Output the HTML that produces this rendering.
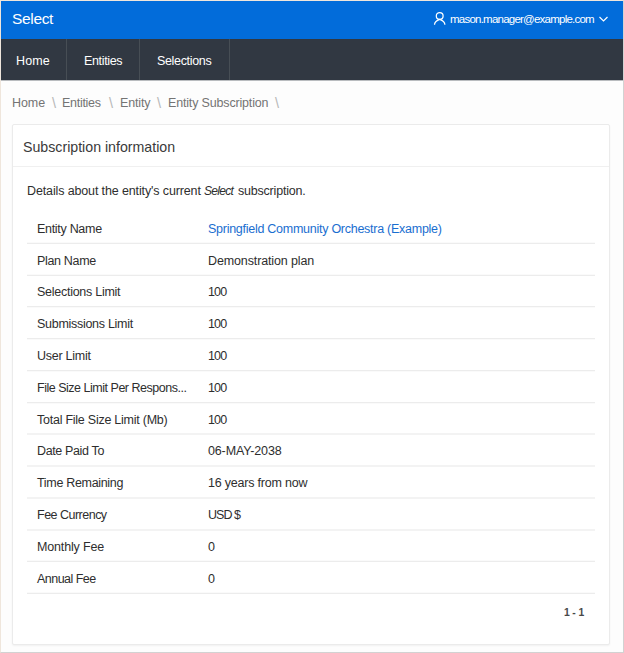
<!DOCTYPE html>
<html><head><meta charset="utf-8"><title>Select</title>
<style>
*{box-sizing:border-box;margin:0;padding:0}
html,body{width:624px;height:653px;overflow:hidden;background:#fdfdfd}
body{font-family:"Liberation Sans",sans-serif;position:relative}
.t{position:absolute;line-height:1;white-space:nowrap}
.frame{position:absolute;left:0;top:0;width:624px;height:653px;border:1px solid #d2d2d2;border-top-color:#efe6dc;border-left-color:#efe6dc;z-index:10}
.hdr{position:absolute;left:1px;top:1px;width:622px;height:38px;background:#026cda}
.nav{position:absolute;left:1px;top:39px;width:622px;height:41px;background:#313842}
.nav i{position:absolute;top:0;width:1px;height:41px;background:#474e55}
.card{position:absolute;left:12px;top:124px;width:598px;height:521px;background:#fff;border:1px solid #ebebeb;border-radius:2px;box-shadow:0 1px 2px rgba(0,0,0,.05)}
.hl{position:absolute;left:13px;top:166px;width:596px;height:1px;background:#f0f0f0}
.rl{position:absolute;left:27px;width:568px;height:1px;background:#eeeeee}
svg{position:absolute;overflow:visible}

</style></head><body>
<div class="hdr"></div>
<div style="position:absolute;left:1px;top:80px;width:622px;height:1px;background:#b9bcbf"></div>
<div class="nav"><i style="left:65px"></i><i style="left:138px"></i><i style="left:228px"></i></div>
<div class="card"></div><div class="hl"></div>
<div class="rl" style="top:242px;background:#fafafa"></div>
<div class="rl" style="top:243px;background:#ececec"></div>
<div class="rl" style="top:274px;background:#fafafa"></div>
<div class="rl" style="top:275px;background:#ececec"></div>
<div class="rl" style="top:306px;background:#ececec"></div>
<div class="rl" style="top:307px;background:#fafafa"></div>
<div class="rl" style="top:338px;background:#ececec"></div>
<div class="rl" style="top:339px;background:#fafafa"></div>
<div class="rl" style="top:370px;background:#ececec"></div>
<div class="rl" style="top:371px;background:#fafafa"></div>
<div class="rl" style="top:402px;background:#ececec"></div>
<div class="rl" style="top:403px;background:#fafafa"></div>
<div class="rl" style="top:433px;background:#f3f3f3"></div>
<div class="rl" style="top:434px;background:#f3f3f3"></div>
<div class="rl" style="top:465px;background:#f3f3f3"></div>
<div class="rl" style="top:466px;background:#f3f3f3"></div>
<div class="rl" style="top:497px;background:#f3f3f3"></div>
<div class="rl" style="top:498px;background:#f3f3f3"></div>
<div class="rl" style="top:529px;background:#f3f3f3"></div>
<div class="rl" style="top:530px;background:#f3f3f3"></div>
<div class="rl" style="top:560px;background:#fafafa"></div>
<div class="rl" style="top:561px;background:#ececec"></div>
<div class="rl" style="top:592px;background:#fafafa"></div>
<div class="rl" style="top:593px;background:#ececec"></div>
<svg style="left:434px;top:12px" width="12" height="13" viewBox="0 0 12 13" fill="none" stroke="#fff" stroke-width="1.25"><circle cx="5.7" cy="3.9" r="3.4"/><path d="M0.5 12.7 C0.6 10.3 2.2 8.6 5.7 7.4 C9.2 8.6 10.8 10.3 10.9 12.7"/></svg>
<svg style="left:599px;top:16px" width="10" height="6" viewBox="0 0 10 6" fill="none" stroke="#fff" stroke-width="1.15"><path d="M0.5 1 L4.5 5 L8.5 1"/></svg>
<span class="t" style="left:12px;top:11px;font-size:15.5px;color:#fff;letter-spacing:-0.34px;">Select</span>
<span class="t" style="left:450px;top:14px;font-size:11.5px;color:#fff;letter-spacing:-0.771px;">mason.manager@example.com</span>
<span class="t" style="left:16px;top:55px;font-size:12.5px;color:#fff;letter-spacing:0.133px;">Home</span>
<span class="t" style="left:84px;top:55px;font-size:12.5px;color:#fff;letter-spacing:-0.343px;">Entities</span>
<span class="t" style="left:157px;top:55px;font-size:12.5px;color:#fff;letter-spacing:-0.333px;">Selections</span>
<span class="t" style="left:12px;top:97px;font-size:12.5px;color:#747474;letter-spacing:-0.067px;">Home</span>
<span class="t" style="left:52px;top:96px;font-size:14.5px;color:#b8b8b8;">\</span>
<span class="t" style="left:62px;top:97px;font-size:12.5px;color:#747474;letter-spacing:-0.286px;">Entities</span>
<span class="t" style="left:109px;top:96px;font-size:14.5px;color:#b8b8b8;">\</span>
<span class="t" style="left:120px;top:97px;font-size:12.5px;color:#747474;letter-spacing:-0.14px;">Entity</span>
<span class="t" style="left:157px;top:96px;font-size:14.5px;color:#b8b8b8;">\</span>
<span class="t" style="left:168px;top:97px;font-size:12.5px;color:#747474;letter-spacing:-0.167px;">Entity Subscription</span>
<span class="t" style="left:275px;top:96px;font-size:14.5px;color:#b8b8b8;">\</span>
<span class="t" style="left:23px;top:140px;font-size:14.2px;color:#3a3a3a;letter-spacing:-0.004px;">Subscription information</span>
<span class="t" style="left:27px;top:185px;font-size:12.5px;color:#2e2e2e;letter-spacing:-0.13px;">Details about the entity's current</span>
<span class="t" style="left:204px;top:185px;font-size:12.0px;color:#2e2e2e;letter-spacing:-0.7px;font-style:italic;">Select</span>
<span class="t" style="left:238px;top:185px;font-size:12.5px;color:#2e2e2e;letter-spacing:-0.208px;">subscription.</span>
<span class="t" style="left:564px;top:608px;font-size:10.4px;color:#484848;letter-spacing:-0.15px;font-weight:bold;">1 - 1</span>
<span class="t" style="left:37px;top:223px;font-size:12.5px;color:#2e2e2e;letter-spacing:-0.3px;">Entity Name</span>
<a class="t" style="left:208px;top:223px;font-size:12.5px;color:#1a6ed0;letter-spacing:-0.265px;">Springfield Community Orchestra (Example)</a>
<span class="t" style="left:37px;top:255px;font-size:12.5px;color:#2e2e2e;letter-spacing:-0.325px;">Plan Name</span>
<span class="t" style="left:208px;top:255px;font-size:12.5px;color:#2e2e2e;letter-spacing:-0.124px;">Demonstration plan</span>
<span class="t" style="left:37px;top:286px;font-size:12.5px;color:#2e2e2e;letter-spacing:-0.267px;">Selections Limit</span>
<span class="t" style="left:208px;top:286px;font-size:12.5px;color:#2e2e2e;letter-spacing:-0.85px;">100</span>
<span class="t" style="left:37px;top:318px;font-size:12.5px;color:#2e2e2e;letter-spacing:-0.287px;">Submissions Limit</span>
<span class="t" style="left:208px;top:318px;font-size:12.5px;color:#2e2e2e;letter-spacing:-0.85px;">100</span>
<span class="t" style="left:37px;top:350px;font-size:12.5px;color:#2e2e2e;letter-spacing:-0.256px;">User Limit</span>
<span class="t" style="left:208px;top:350px;font-size:12.5px;color:#2e2e2e;letter-spacing:-0.85px;">100</span>
<span class="t" style="left:37px;top:382px;font-size:12.5px;color:#2e2e2e;letter-spacing:-0.483px;">File Size Limit Per Respons...</span>
<span class="t" style="left:208px;top:382px;font-size:12.5px;color:#2e2e2e;letter-spacing:-0.85px;">100</span>
<span class="t" style="left:37px;top:414px;font-size:12.5px;color:#2e2e2e;letter-spacing:-0.246px;">Total File Size Limit (Mb)</span>
<span class="t" style="left:208px;top:414px;font-size:12.5px;color:#2e2e2e;letter-spacing:-0.85px;">100</span>
<span class="t" style="left:37px;top:445px;font-size:12.5px;color:#2e2e2e;letter-spacing:-0.364px;">Date Paid To</span>
<span class="t" style="left:208px;top:445px;font-size:12.5px;color:#2e2e2e;letter-spacing:-0.14px;">06-MAY-2038</span>
<span class="t" style="left:37px;top:477px;font-size:12.5px;color:#2e2e2e;letter-spacing:-0.319px;">Time Remaining</span>
<span class="t" style="left:208px;top:477px;font-size:12.5px;color:#2e2e2e;letter-spacing:-0.213px;">16 years from now</span>
<span class="t" style="left:37px;top:509px;font-size:12.5px;color:#2e2e2e;letter-spacing:-0.509px;">Fee Currency</span>
<span class="t" style="left:208px;top:509px;font-size:12.5px;color:#2e2e2e;letter-spacing:-0.975px;">USD $</span>
<span class="t" style="left:37px;top:541px;font-size:12.5px;color:#2e2e2e;letter-spacing:-0.16px;">Monthly Fee</span>
<span class="t" style="left:208px;top:541px;font-size:12.5px;color:#2e2e2e;">0</span>
<span class="t" style="left:37px;top:573px;font-size:12.5px;color:#2e2e2e;letter-spacing:-0.522px;">Annual Fee</span>
<span class="t" style="left:208px;top:573px;font-size:12.5px;color:#2e2e2e;">0</span>
<div class="frame"></div>
</body></html>
